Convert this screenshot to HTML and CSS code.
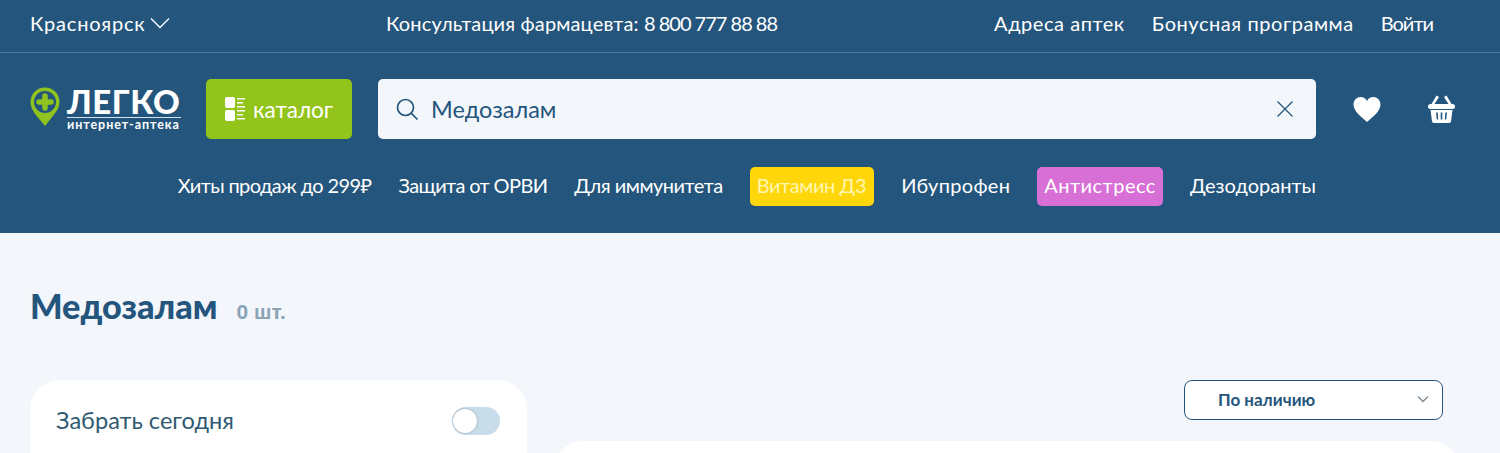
FILE: index.html
```html
<!DOCTYPE html>
<html lang="ru">
<head>
    <title>Медозалам</title>
    <link rel="stylesheet" href="styles.css">
</head>
<body>

<header class="header">
    <div class="topbar">
        <a class="city">Красноярск
            <svg width="20" height="12" viewBox="0 0 20 12"><path d="M1 1.500 10 10.500l9-9" fill="none" stroke="#fff" stroke-width="1.300"/></svg>
        </a>
        <span class="phone">Консультация фармацевта: <span class="phone-num">8 800 777 88 88</span></span>
        <nav class="toplinks">
            <a>Адреса аптек</a>
            <a>Бонусная программа</a>
            <a class="login">Войти</a>
        </nav>
    </div>

    <div class="mainbar">
        <a class="logo">
            <svg class="logo-pin" width="30" height="39" viewBox="0 0 30 39">
                <path d="M15 0.500C6.800 0.500 0.500 6.800 0.500 15c0 4.500 2 8 4.500 12l10 12 9.500-12c3-4 5-7.500 5-12C29.500 6.800 23.200 0.500 15 0.500z" fill="#8fc31f"/>
                <circle cx="15" cy="15" r="11" fill="#24557c"/>
                <path d="M15 9v12M9 15h12" fill="none" stroke="#8fc31f" stroke-width="5.500" stroke-linecap="round"/>
            </svg>
            <span class="logo-text">
                <span class="logo-name">ЛЕГКО</span>
                <span class="logo-sub">интернет-аптека</span>
            </span>
        </a>
        <button class="catalog">
            <svg width="21" height="24" viewBox="0 0 21 24" fill="#fff">
                <rect x="0" y="0" width="10" height="11" rx="2"/>
                <rect x="0" y="13" width="10" height="11" rx="2"/>
                <rect x="12" y="1" width="8" height="1.500"/>
                <rect x="12" y="5" width="6" height="1.500"/>
                <rect x="12" y="9" width="8" height="1.500"/>
                <rect x="12" y="13" width="8" height="1.500"/>
                <rect x="12" y="17" width="6" height="1.500"/>
                <rect x="12" y="21" width="8" height="1.500"/>
            </svg>
            каталог
        </button>
        <div class="search">
            <svg width="24" height="24" viewBox="0 0 24 24" fill="none" stroke="#24557c" stroke-width="1.700"><circle cx="10.500" cy="10.500" r="8"/><path d="m16.500 16.500 6 6"/></svg>
            <span class="search-text">Медозалам</span>
            <svg width="18" height="18" viewBox="0 0 18 18" fill="none" stroke="#24557c" stroke-width="1.300"><path d="m1.500 1.500 15 15M16.500 1.500l-15 15"/></svg>
        </div>
        <div class="actions">
            <svg width="28" height="25" viewBox="0 0 28 25"><path d="M14 25C9 20.500 0.500 14.500 0.500 7.500 0.500 3 4 0 7.500 0 10.500 0 12.800 1.500 14 4 15.200 1.500 17.500 0 20.500 0 24 0 27.500 3 27.500 7.500 27.500 14.500 19 20.500 14 25z" fill="#fff"/></svg>
            <svg width="27" height="28" viewBox="0 0 27 28" fill="#fff">
                <path d="M8.500 0.500 11 2 6.500 9H3.500zM18.500 0.500 16 2l4.500 7h3z"/>
                <rect x="0" y="9" width="27" height="5" rx="2.500"/>
                <path d="M2.500 15h22l-1.500 11.500a2 2 0 0 1-2 1.500H6a2 2 0 0 1-2-1.500zM8 17.500l.800 7h1.400l-.500-7zM12.700 17.500v7h1.600v-7zM17.300 17.500l-.500 7h1.400l.800-7z" fill-rule="evenodd"/>
            </svg>
        </div>
    </div>

    <nav class="quicklinks">
        <a class="tight">Хиты продаж до 299₽</a>
        <a class="tight">Защита от ОРВИ</a>
        <a>Для иммунитета</a>
        <a class="tag tag-yellow">Витамин Д3</a>
        <a class="loose">Ибупрофен</a>
        <a class="tag tag-pink">Антистресс</a>
        <a class="plain">Дезодоранты</a>
    </nav>
</header>

<main class="page">
    <div class="title-row">
        <h1>Медозалам</h1>
        <span class="count">0 шт.</span>
    </div>

    <div class="columns">
        <aside class="filters">
            <span class="filter-label">Забрать сегодня</span>
            <span class="toggle"></span>
        </aside>
        <section class="results">
            <div class="sort">
                <span>По наличию</span>
                <svg width="12" height="8" viewBox="0 0 12 8"><path d="m1 1.500 5 5 5-5" fill="none" stroke="#7c8c99" stroke-width="1.400"/></svg>
            </div>
            <div class="results-card"></div>
        </section>
    </div>
</main>

</body>
</html>
```

FILE: styles.css
```css
:root {
    --blue: #24557c;
    --bg: #f3f7fc;
    --green: #93c41c;
}

* {
    box-sizing: border-box;
}

body {
    margin: 0;
    height: 453px;
    background: var(--bg);
    color: var(--blue);
    font-family: Lato, "Noto Sans", sans-serif;
    overflow: hidden;
}

.header {
    background: var(--blue);
    color: #fff;
    height: 233px;
    font-size: 20px;
}

.topbar {
    display: flex;
    align-items: center;
    height: 53px;
    padding: 0 67px 7px 30px;
    border-bottom: 1px solid #4f7799;
}

.city {
    display: flex;
    align-items: center;
    gap: 5px;
    width: 356px;
    letter-spacing: 0.8px;
}

.phone {
    flex: 1;
    letter-spacing: 0.15px;
}

.phone-num {
    letter-spacing: -1px;
}

.toplinks {
    display: flex;
    gap: 27px;
    letter-spacing: 0.55px;
}

.login {
    letter-spacing: -1px;
}

.mainbar {
    display: flex;
    align-items: center;
    height: 60px;
    margin-top: 26px;
    padding-left: 30px;
}

.logo {
    display: flex;
    align-items: center;
    gap: 7px;
    width: 176px;
}

.logo-pin {
    margin-top: -6px;
}

.logo-text {
    display: flex;
    flex-direction: column;
    width: 114px;
}

.logo-name {
    height: 31px;
    border-bottom: 1px solid #cfe0ee;
    font-size: 33px;
    font-weight: 900;
    line-height: 28px;
    letter-spacing: 0.5px;
    white-space: nowrap;
}

.logo-sub {
    font-size: 12.500px;
    font-weight: 700;
    line-height: 14px;
    letter-spacing: 0.95px;
    white-space: nowrap;
}

.catalog {
    display: flex;
    align-items: center;
    justify-content: center;
    gap: 7px;
    width: 146px;
    height: 60px;
    border: 0;
    border-radius: 5px;
    background: var(--green);
    color: #fff;
    font-family: inherit;
    font-size: 22.500px;
}

.search {
    display: flex;
    align-items: center;
    width: 938px;
    height: 60px;
    margin-left: 26px;
    padding: 0 22px 0 17px;
    border-radius: 5px;
    background: var(--bg);
    color: var(--blue);
}

.search-text {
    flex: 1;
    margin-left: 12px;
    font-size: 23.500px;
}

.actions {
    display: flex;
    align-items: center;
    gap: 47px;
    margin-left: 37px;
}

.quicklinks {
    display: flex;
    align-items: center;
    justify-content: flex-end;
    height: 39px;
    margin-top: 28px;
    padding-right: 184px;
    gap: 27px;
    line-height: 35px;
    letter-spacing: -0.5px;
}

.tight {
    letter-spacing: -0.62px;
}

.loose {
    letter-spacing: 0.3px;
}

.plain {
    letter-spacing: 0;
}

.tag {
    display: flex;
    align-items: center;
    height: 39px;
    padding: 0 7px 3px;
    border-radius: 5px;
}

.quicklinks a:not(.tag) {
    margin-top: -3px;
}

.tag-yellow {
    background: #ffd60a;
    color: #fff6b0;
    padding-right: 8px;
    letter-spacing: -0.4px;
}

.tag-pink {
    background: #d86fd6;
    letter-spacing: 0.5px;
}

.page {
    height: 220px;
    padding: 0 40px 0 30px;
    overflow: hidden;
}

.title-row {
    display: flex;
    align-items: baseline;
    gap: 19px;
    height: 147px;
    padding-top: 53px;
}

h1 {
    margin: 0;
    font-size: 34.300px;
    font-weight: 900;
    line-height: 40px;
}

.count {
    color: #8ba3b5;
    font-family: "Liberation Sans", sans-serif;
    font-size: 21px;
    font-weight: 700;
}

.columns {
    display: flex;
    gap: 26px;
}

.filters {
    display: flex;
    align-items: flex-start;
    justify-content: space-between;
    align-self: flex-start;
    width: 497px;
    height: 160px;
    padding: 27px 27px 0 26px;
    border-radius: 30px;
    background: #fff;
    font-size: 23.600px;
    color: #2f5a72;
}

.filter-label {
    line-height: 26px;
}

.toggle {
    position: relative;
    width: 48px;
    height: 28px;
    border-radius: 14px;
    background: #c9dcea;
}

.toggle::before {
    content: "";
    position: absolute;
    left: 1px;
    top: 2px;
    width: 24px;
    height: 24px;
    border-radius: 50%;
    background: #fff;
    box-shadow: 0 0 2px #8a9aa6;
}

.results {
    flex: 1;
    display: flex;
    flex-direction: column;
}

.sort {
    display: flex;
    align-items: center;
    justify-content: space-between;
    align-self: flex-end;
    width: 259px;
    height: 40px;
    margin-right: 17px;
    padding: 0 13px 2px 33px;
    border: 1px solid var(--blue);
    border-radius: 8px;
    background: #fff;
    font-size: 17px;
    font-weight: 700;
}

.results-card {
    height: 160px;
    margin-top: 21px;
    border-radius: 30px;
    background: #fff;
}
```
